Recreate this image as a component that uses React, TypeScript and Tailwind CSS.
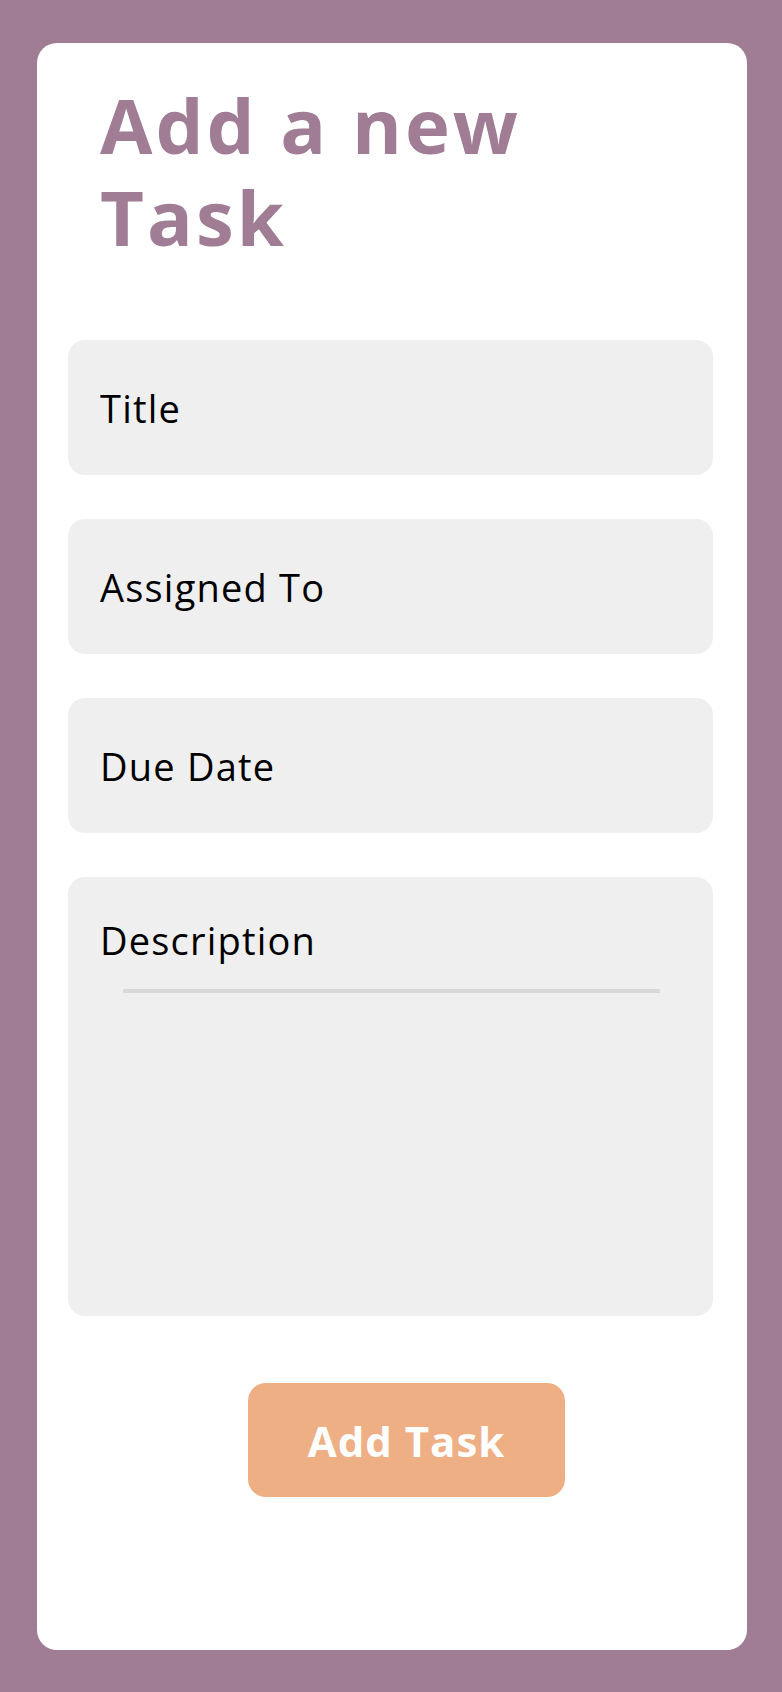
import React from "react";

const fields = ["Title", "Assigned To", "Due Date"];

export default function App() {
  return (
    <div className="min-h-screen bg-[#a07d94] pl-[37px] pr-[35px] pt-[43px] pb-[42px] font-['Open_Sans',sans-serif]">
      <div className="flex h-[1607px] flex-col rounded-[20px] bg-white pl-[31px] pr-[34px] pt-[36px]">
        {/* heading */}
        <h1 className="pl-[32px] text-[76px] font-bold leading-[92px] tracking-[3px] text-[#a07d95]">
          Add a new
          <br />
          Task
        </h1>

        {/* form */}
        <form className="mt-[77px] flex flex-col gap-[44px]">
          {fields.map((label) => (
            <input
              key={label}
              type="text"
              placeholder={label}
              className="h-[135px] w-full rounded-[17px] bg-[#efefef] px-[32px] text-[38px] tracking-[1.2px] text-black outline-none placeholder:text-black"
            />
          ))}

          <div className="h-[439px] rounded-[17px] bg-[#efefef] pl-[32px] pr-[53px] pt-[35px]">
            <p className="text-[38px] tracking-[1.2px] text-black">Description</p>
            <div className="ml-[23px] mt-[20px] h-[4px] bg-[#d9d9d9]" />
          </div>
        </form>

        {/* submit */}
        <div className="mt-[67px]">
          <button
            type="button"
            className="ml-[180px] h-[114px] w-[317px] rounded-[18px] bg-[#efaf84] text-[42px] font-bold tracking-[1px] text-white"
          >
            Add Task
          </button>
        </div>
      </div>
    </div>
  );
}
